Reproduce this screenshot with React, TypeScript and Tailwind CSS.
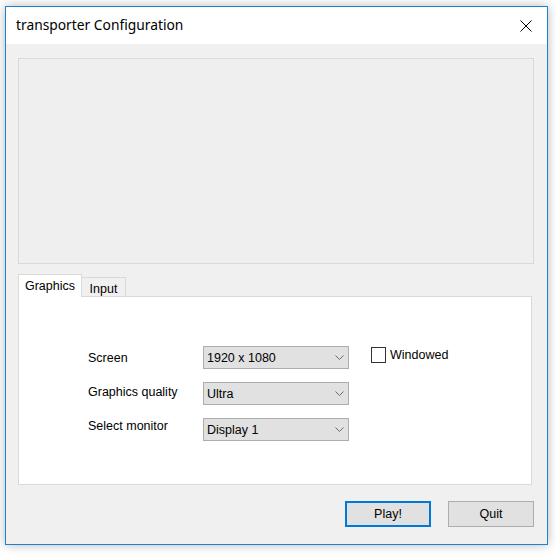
import React from "react";

function Chevron() {
  return (
    <svg width="9" height="5" viewBox="0 0 9 5" className="shrink-0">
      <path d="M0.5 0.5 L4.5 4.5 L8.5 0.5" fill="none" stroke="#6a6a6a" strokeWidth="1" />
    </svg>
  );
}

function Select({ value }: { value: string }) {
  return (
    <div className="h-[23px] w-[146px] border border-[#adadad] bg-[#e1e1e1] flex items-center justify-between pl-[3px] pr-[4px]">
      <span className="text-[12.5px] leading-[14px] text-black">{value}</span>
      <Chevron />
    </div>
  );
}

export default function App() {
  return (
    <div className="w-[556px] h-[555px] bg-white overflow-hidden font-['Liberation_Sans',Arial,sans-serif]">
      <div className="ml-[5px] mt-[6px] w-[543px] h-[539px] border border-[#1883d7] bg-[#f0f0f0] flex flex-col shadow-[0_0_10px_rgba(0,0,0,0.28)]">
        {/* Title bar */}
        <div className="h-[37px] shrink-0 bg-white flex items-center justify-between pl-[10px] pr-[15px]">
          <span className="text-[13.8px] text-black font-['Noto_Sans',sans-serif]">transporter Configuration</span>
          <svg width="12" height="12" viewBox="0 0 12 12">
            <path d="M0.5 0.5 L11.5 11.5 M11.5 0.5 L0.5 11.5" stroke="#000" strokeWidth="1" fill="none" />
          </svg>
        </div>
        {/* Body */}
        <div className="flex-1 flex flex-col pl-[12px] pr-[13px] pt-[14px]">
          <div className="h-[206px] shrink-0 border border-[#d9d9d9] bg-[#efefef]" />
          <div className="mt-[10px] h-[23px] flex items-end mr-[2px]">
            <div className="relative z-10 h-[23px] w-[64px] border border-b-0 border-[#d9d9d9] bg-white flex items-start justify-center pt-[4px]">
              <span className="text-[12.5px] leading-[14px] text-black">Graphics</span>
            </div>
            <div className="h-[20px] w-[44px] border border-l-0 border-[#d9d9d9] bg-[#f0f0f0] flex items-start justify-center pt-[4px]">
              <span className="text-[12.5px] leading-[14px] text-black">Input</span>
            </div>
          </div>
          <div className="-mt-px mr-[2px] h-[189px] border border-[#d9d9d9] bg-white pl-[69px] pt-[49px]">
            <div className="grid grid-cols-[115px_146px_auto] grid-rows-[23px_23px_23px] gap-y-[13px]">
              <span className="mt-[5px] text-[12.5px] leading-[14px] text-black">Screen</span>
              <Select value="1920 x 1080" />
              <div className="ml-[22px] mt-px flex items-center gap-[4px] self-start">
                <div className="w-[15px] h-[16px] border border-[#333333] bg-white" />
                <span className="text-[12.5px] leading-[14px] text-black">Windowed</span>
              </div>
              <span className="mt-[3px] text-[12.5px] leading-[14px] text-black">Graphics quality</span>
              <Select value="Ultra" />
              <div />
              <span className="mt-[1px] text-[12.5px] leading-[14px] text-black">Select monitor</span>
              <Select value="Display 1" />
              <div />
            </div>
          </div>
          <div className="mt-[16px] flex justify-end gap-[17px]">
            <div className="h-[26px] w-[86px] border-2 border-[#0078d7] bg-[#e1e1e1] flex items-center justify-center">
              <span className="text-[12.5px] leading-[14px] text-black">Play!</span>
            </div>
            <div className="h-[26px] w-[86px] border border-[#adadad] bg-[#e1e1e1] flex items-center justify-center">
              <span className="text-[12.5px] leading-[14px] text-black">Quit</span>
            </div>
          </div>
        </div>
      </div>
    </div>
  );
}
